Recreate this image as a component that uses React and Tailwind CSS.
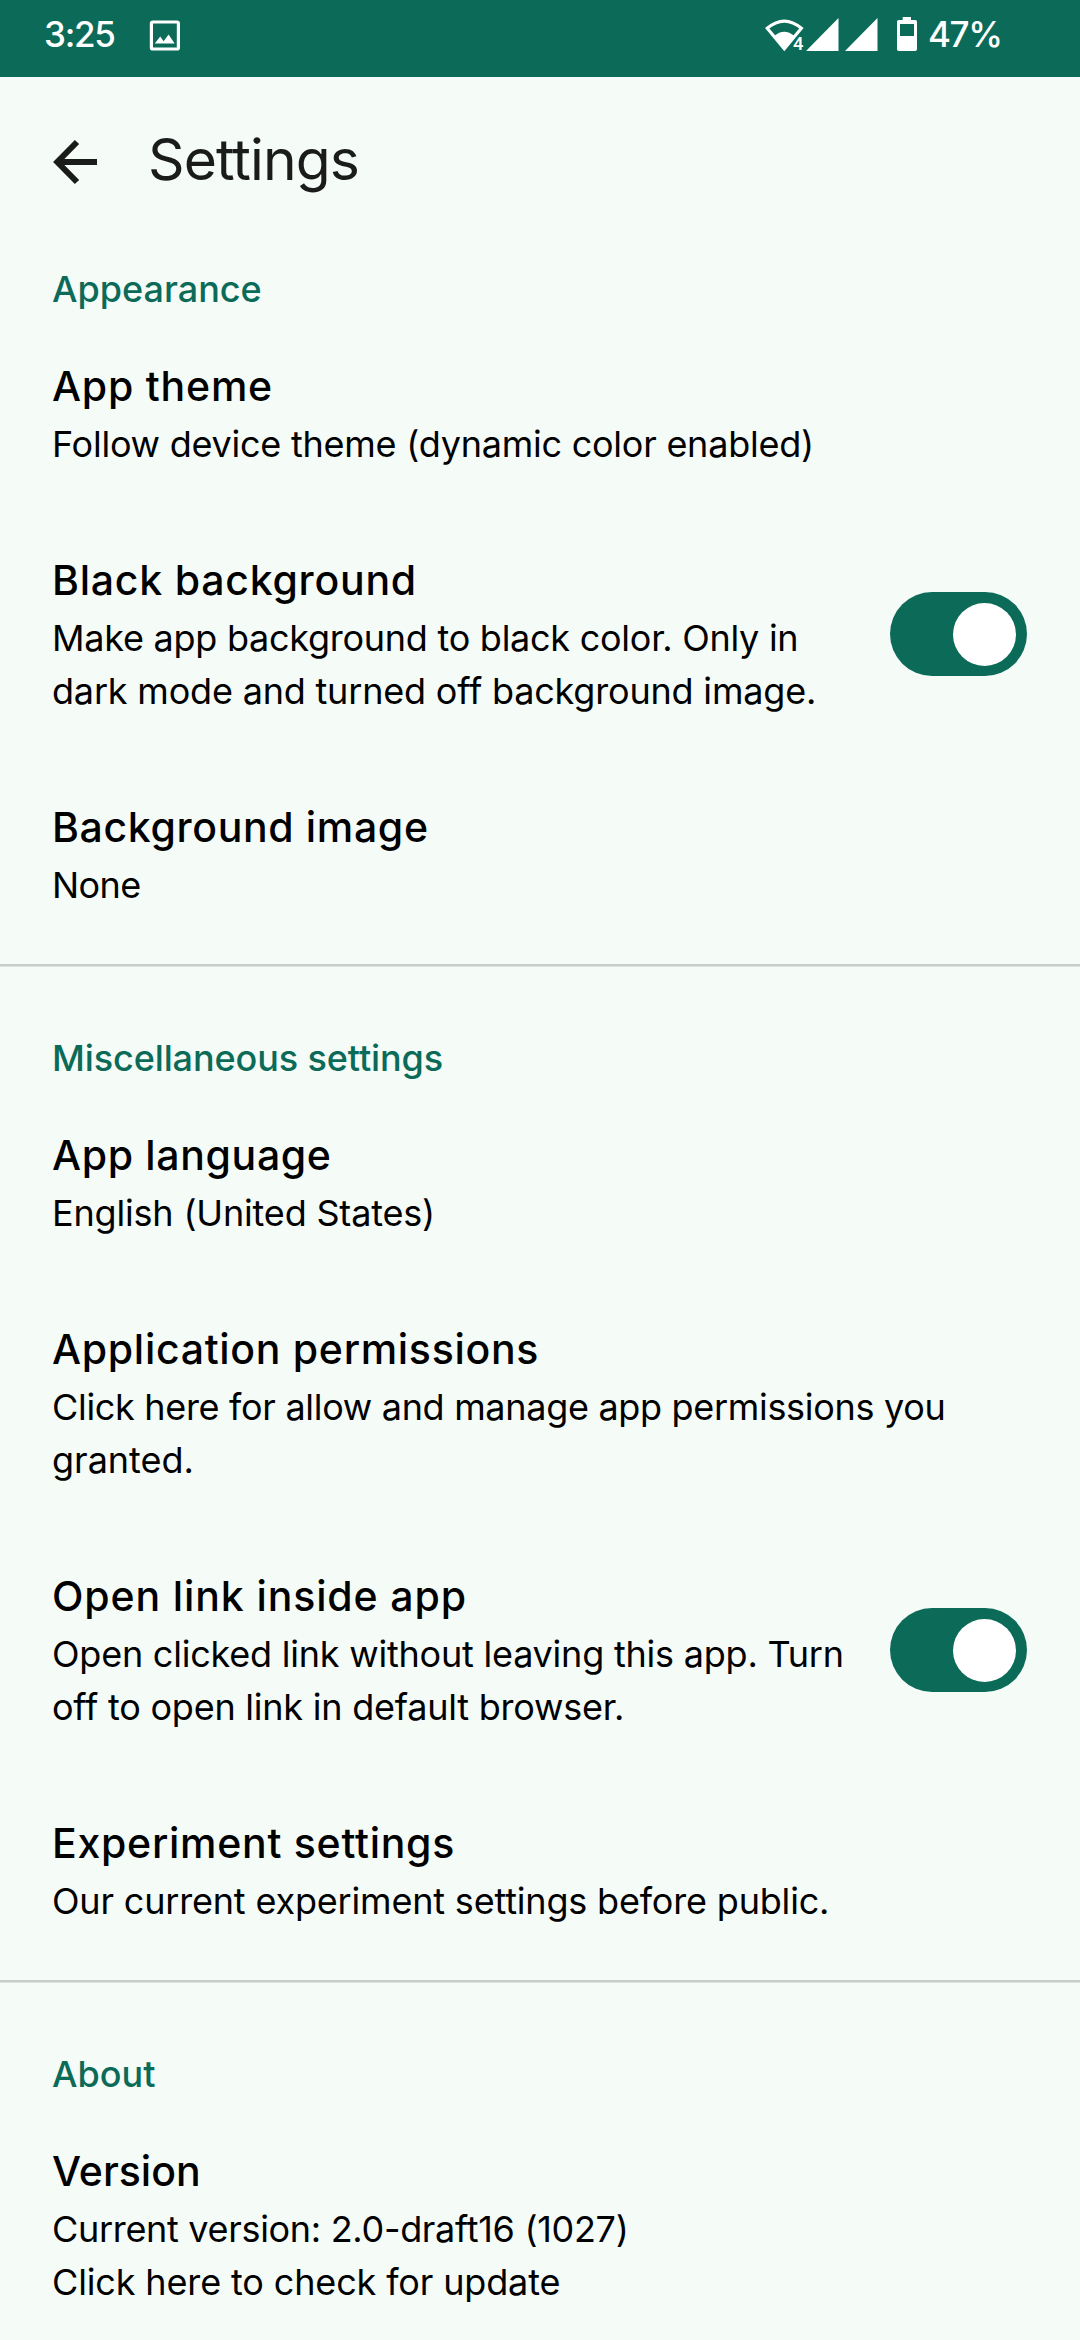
const SECTIONS = [
  {
    label: "Appearance",
    labelClass: "tracking-[0px]",
    items: [
      {
        title: "App theme",
        titleClass: "tracking-[0.78px]",
        lines: [["Follow device theme (dynamic color enabled)", "tracking-[-0.24px]"]],
      },
      {
        title: "Black background",
        titleClass: "tracking-[0.77px]",
        lines: [
          ["Make app background to black color. Only in", "tracking-[-0.26px]"],
          ["dark mode and turned off background image.", "tracking-[-0.19px]"],
        ],
        toggle: true,
      },
      {
        title: "Background image",
        titleClass: "tracking-[0.65px]",
        lines: [["None", "tracking-[-0.6px]"]],
      },
    ],
  },
  {
    label: "Miscellaneous settings",
    labelClass: "tracking-[-0.11px]",
    items: [
      {
        title: "App language",
        titleClass: "tracking-[0.65px]",
        lines: [["English (United States)", "tracking-[-0.18px]"]],
      },
      {
        title: "Application permissions",
        titleClass: "tracking-[0.7px]",
        lines: [
          ["Click here for allow and manage app permissions you", "tracking-[-0.31px]"],
          ["granted.", "tracking-[0px]"],
        ],
      },
      {
        title: "Open link inside app",
        titleClass: "tracking-[0.88px]",
        lines: [
          ["Open clicked link without leaving this app. Turn", "tracking-[-0.22px]"],
          ["off to open link in default browser.", "tracking-[-0.23px]"],
        ],
        toggle: true,
      },
      {
        title: "Experiment settings",
        titleClass: "tracking-[0.73px]",
        lines: [["Our current experiment settings before public.", "tracking-[-0.18px]"]],
      },
    ],
  },
  {
    label: "About",
    labelClass: "tracking-[0px]",
    items: [
      {
        title: "Version",
        titleClass: "tracking-[0px]",
        lines: [
          ["Current version: 2.0-draft16 (1027)", "tracking-[-0.31px]"],
          ["Click here to check for update", "tracking-[-0.14px]"],
        ],
      },
    ],
  },
];

function PictureIcon() {
  return (
    <svg className="h-[31px] w-[31px]" viewBox="0 0 31 31" fill="none">
      <rect x="2.4" y="2" width="27" height="27" rx="1.6" stroke="#fff" strokeWidth="3.2" />
      <path d="M5.8 23.6 11.2 16.6 14.6 21.2 19.6 14.6 25.6 23.6Z" fill="#fff" />
    </svg>
  );
}

function WifiIcon() {
  return (
    <svg className="h-[36px] w-[42px]" viewBox="0 0 42 36" fill="none">
      <path d="M3.2 11.3Q20.3 -3.2 37.4 11.3L20.3 31.8Z" stroke="#fff" strokeWidth="3.1" />
      <path d="M10.2 19Q20.3 10.3 30.4 19L20.3 33.5Z" fill="#fff" />
      <text
        x="29"
        y="33"
        fontFamily="Roboto, sans-serif"
        fontSize="18.5"
        fill="#fff"
        stroke="#0b6b58"
        strokeWidth="3"
        paintOrder="stroke"
      >
        4
      </text>
    </svg>
  );
}

function SignalIcon({ className }) {
  return (
    <svg className={className} viewBox="0 0 33 33">
      <path d="M0 33H32.5V0Z" fill="#fff" />
    </svg>
  );
}

function BatteryIcon() {
  return (
    <svg className="ml-[19px] h-[34px] w-[20px]" viewBox="0 0 20 34">
      <path
        fillRule="evenodd"
        fill="#fff"
        d="M5.7 0H14V3H18.2Q20 3 20 4.8V32.2Q20 34 18.2 34H1.8Q0 34 0 32.2V4.8Q0 3 1.8 3H5.7ZM3 7V19H17V7Z"
      />
    </svg>
  );
}

function StatusBar() {
  return (
    <header className="flex h-[77px] items-start bg-[#0b6b58] text-[35px] leading-[42px] font-medium text-white">
      <span className="mt-[13px] ml-[44px] w-[105px] tracking-[-1.3px]">3:25</span>
      <div className="mt-[20px]">
        <PictureIcon />
      </div>
      <div className="mt-[17px] ml-auto flex items-end">
        <WifiIcon />
        <SignalIcon className="mb-[2px] h-[33px] w-[33px]" />
        <SignalIcon className="mb-[2px] ml-[6px] h-[33px] w-[33px]" />
        <div className="mb-[2px]">
          <BatteryIcon />
        </div>
      </div>
      <span className="mt-[13px] ml-[11px] w-[152px] tracking-[-1.4px]">47%</span>
    </header>
  );
}

function AppBar() {
  return (
    <div className="flex h-[186px] items-start pl-[50px]">
      <svg className="mt-[60px] h-[50px] w-[50px]" viewBox="0 0 50 50" fill="none">
        <path d="M47 25H8M27 5 7.3 25 27 45" stroke="#191c1b" strokeWidth="6" />
      </svg>
      <h1 className="mt-[48px] ml-[48px] text-[57px] leading-[70px] tracking-[-0.9px] text-[#191c1b]">
        Settings
      </h1>
    </div>
  );
}

function Toggle() {
  return (
    <button
      role="switch"
      aria-checked="true"
      className="flex h-[84px] w-[137px] items-center justify-end rounded-full bg-[#0b6b58] pr-[11px]"
    >
      <span className="h-[63px] w-[63px] rounded-full bg-white" />
    </button>
  );
}

function Item({ title, titleClass, lines, toggle }) {
  return (
    <li className="flex items-center justify-between pt-[40px] pr-[53px] pb-[39px] pl-[52px]">
      <div className="whitespace-nowrap text-black">
        <h3 className="mb-[2px] text-[41px] leading-[60px] font-medium">
          <span className={titleClass}>{title}</span>
        </h3>
        {lines.map(([text, cls]) => (
          <p key={text} className="text-[36px] leading-[53px]">
            <span className={cls}>{text}</span>
          </p>
        ))}
      </div>
      {toggle && <Toggle />}
    </li>
  );
}

export default function App() {
  return (
    <div className="h-[2340px] w-[1080px] overflow-hidden bg-[#f5fbf7] font-['Inter',sans-serif]">
      <StatusBar />
      <AppBar />
      {SECTIONS.map((s, i) => (
        <section key={s.label}>
          {i > 0 && (
            <div className="mt-[13px] mb-[65px] h-[3px] border-b border-[#dfe3e0] bg-[#c9cdca]" />
          )}
          <h2 className="pl-[52px] text-[36px] leading-[53px] font-medium text-[#0b6b58]">
            <span className={s.labelClass}>{s.label}</span>
          </h2>
          <ul>
            {s.items.map((item) => (
              <Item key={item.title} {...item} />
            ))}
          </ul>
        </section>
      ))}
    </div>
  );
}
